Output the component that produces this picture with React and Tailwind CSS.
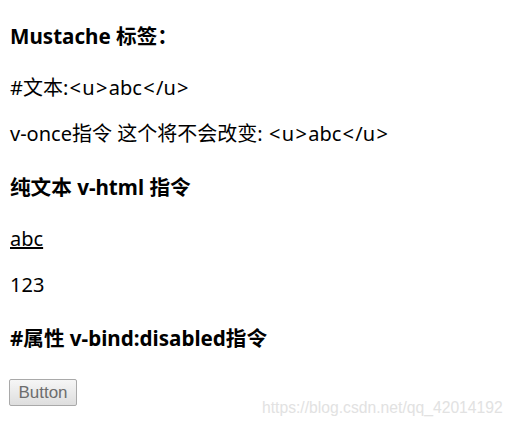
const A = ({ c }) => <span className="mx-[1.3px]">{c}</span>;
const Tag = ({ close }) => (
  <>
    <A c="<" />
    {close ? "/" : ""}u
    <A c=">" />
  </>
);

export default function App() {
  const f = { fontFamily: '"Noto Sans", "Noto Sans CJK SC", sans-serif' };
  return (
    <div className="relative w-[515px] h-[427px] bg-white text-black overflow-hidden" style={f}>
      <div className="flex flex-col items-start pl-[10px] pt-[21px]">
        <h3 className="text-[20.6px] font-bold leading-[30px] h-[30px]">Mustache 标签：</h3>
        <p className="mt-[24px] text-[20px] leading-[26px] h-[26px]">
          #文本:<Tag />abc<Tag close />
        </p>
        <p className="mt-[20px] text-[20px] leading-[26px] h-[26px]">
          v-once指令 这个将不会改变: <Tag />abc<Tag close />
        </p>
        <h3 className="mt-[25px] text-[20.6px] font-bold leading-[30px] h-[30px]">纯文本 v-html 指令</h3>
        <p className="mt-[24px] text-[20px] leading-[26px] h-[26px]"><u>abc</u></p>
        <p className="mt-[20px] text-[20px] leading-[26px] h-[26px]">123</p>
        <h3 className="mt-[25px] text-[20.6px] font-bold leading-[30px] h-[30px]">#属性 v-bind:disabled指令</h3>
        <button
          disabled
          className="mt-[26px] -ml-[1px] w-[68px] h-[27px] border border-[#a9a9a9] rounded-[2px] bg-gradient-to-b from-[#f6f6f6] to-[#dedede] text-[#6d6d6d] text-[17px] leading-none"
          style={{ fontFamily: '"Liberation Sans", Arial, sans-serif' }}
        >
          Button
        </button>
      </div>
      <div
        className="absolute left-[262px] top-[399px] text-[15.7px] leading-[18px] text-[#e2e2e2] whitespace-nowrap"
        style={{ fontFamily: '"Liberation Sans", Arial, sans-serif' }}
      >
        https://blog.csdn.net/qq_42014192
      </div>
    </div>
  );
}
